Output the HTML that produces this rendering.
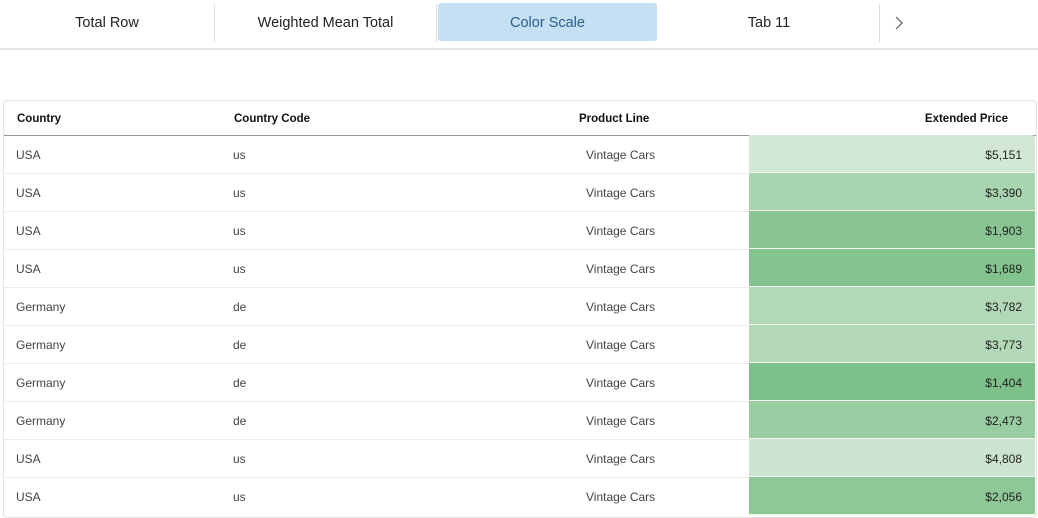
<!DOCTYPE html>
<html><head><style>
body{margin:0;width:1038px;height:518px;background:#fff;font-family:"Liberation Sans",sans-serif;position:relative;overflow:hidden}
.tabs{position:absolute;left:0;top:0;width:1038px;height:48px;border-bottom:2px solid #e3e3e3}
.tab{position:absolute;top:4px;height:38px;line-height:38px;text-align:center;font-size:14.5px;color:#222}
.sep{position:absolute;top:4px;width:1px;height:38px;background:#ddd}
.active{top:3px;line-height:40px;background:#c5dff3;border-radius:3px;color:#2b5f8c}
.tbl{position:absolute;left:3px;top:100px;width:1032px;height:416px;border:1px solid #e4e4e4;border-radius:4px;overflow:hidden}
.row{position:absolute;left:0;width:1032px;height:38px;border-bottom:1px solid #ececec;font-size:12px;color:#444}
.hdr{height:34px;border-bottom:1px solid #999;font-weight:bold;color:#111;font-size:11.5px}
.c{position:absolute;top:1px;line-height:38px}
.hdr .c{line-height:34px}
.price{position:absolute;left:746px;top:0;width:286px;height:37px;border-bottom:1px solid #f2f2f2}
.price span{position:absolute;right:13px;top:1px;line-height:38px;color:#222}
</style></head><body>
<div class="tabs">
<div class="tab" style="left:0;width:214px">Total Row</div>
<div class="sep" style="left:214px"></div>
<div class="tab" style="left:215px;width:221px">Weighted Mean Total</div>
<div class="sep" style="left:436px"></div>
<div class="tab active" style="left:438px;width:219px;height:38px">Color Scale</div>
<div class="tab" style="left:659px;width:220px">Tab 11</div>
<div class="sep" style="left:879px"></div>
<svg style="position:absolute;left:894px;top:16px" width="10" height="14"><path d="M2 1 L8 7 L2 13" fill="none" stroke="#555" stroke-width="1.2"/></svg>
</div>
<div class="tbl">
<div class="row hdr" style="top:0"><div class="c" style="left:13px">Country</div><div class="c" style="left:230px">Country Code</div><div class="c" style="left:575px">Product Line</div><div class="c" style="right:28px">Extended Price</div></div>
</div>
<div class="tbl" style="border:none;background:none;top:135px;height:382px">
<div class="row" style="top:0"><div class="c" style="left:13px">USA</div><div class="c" style="left:230px">us</div><div class="c" style="left:583px">Vintage Cars</div><div class="price" style="background:#d2e8d5"><span>$5,151</span></div></div>
<div class="row" style="top:38px"><div class="c" style="left:13px">USA</div><div class="c" style="left:230px">us</div><div class="c" style="left:583px">Vintage Cars</div><div class="price" style="background:#a9d4b0"><span>$3,390</span></div></div>
<div class="row" style="top:76px"><div class="c" style="left:13px">USA</div><div class="c" style="left:230px">us</div><div class="c" style="left:583px">Vintage Cars</div><div class="price" style="background:#88c592"><span>$1,903</span></div></div>
<div class="row" style="top:114px"><div class="c" style="left:13px">USA</div><div class="c" style="left:230px">us</div><div class="c" style="left:583px">Vintage Cars</div><div class="price" style="background:#83c38d"><span>$1,689</span></div></div>
<div class="row" style="top:152px"><div class="c" style="left:13px">Germany</div><div class="c" style="left:230px">de</div><div class="c" style="left:583px">Vintage Cars</div><div class="price" style="background:#b1d8b7"><span>$3,782</span></div></div>
<div class="row" style="top:190px"><div class="c" style="left:13px">Germany</div><div class="c" style="left:230px">de</div><div class="c" style="left:583px">Vintage Cars</div><div class="price" style="background:#b2d8b8"><span>$3,773</span></div></div>
<div class="row" style="top:228px"><div class="c" style="left:13px">Germany</div><div class="c" style="left:230px">de</div><div class="c" style="left:583px">Vintage Cars</div><div class="price" style="background:#7ec089"><span>$1,404</span></div></div>
<div class="row" style="top:266px"><div class="c" style="left:13px">Germany</div><div class="c" style="left:230px">de</div><div class="c" style="left:583px">Vintage Cars</div><div class="price" style="background:#98cca1"><span>$2,473</span></div></div>
<div class="row" style="top:304px"><div class="c" style="left:13px">USA</div><div class="c" style="left:230px">us</div><div class="c" style="left:583px">Vintage Cars</div><div class="price" style="background:#cce5d0"><span>$4,808</span></div></div>
<div class="row" style="top:342px;border-bottom:none"><div class="c" style="left:13px">USA</div><div class="c" style="left:230px">us</div><div class="c" style="left:583px">Vintage Cars</div><div class="price" style="background:#8dc896"><span>$2,056</span></div></div>
</div>
</body></html>
